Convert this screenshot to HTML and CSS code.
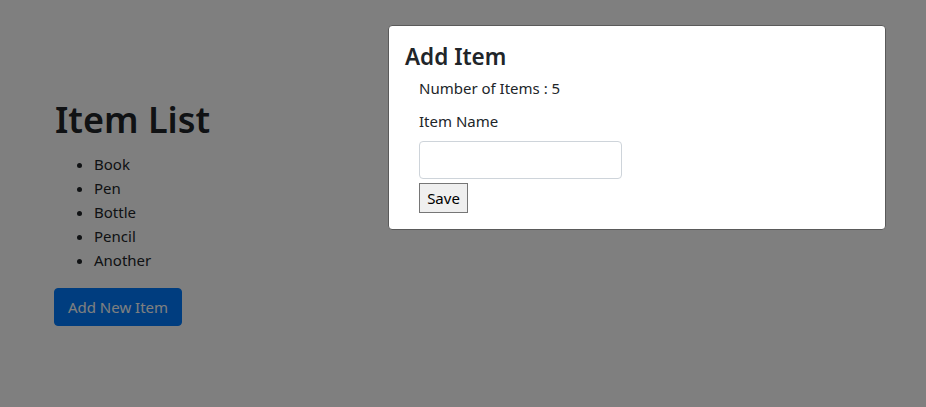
FILE: index.html
```html
<!DOCTYPE html>
<html>
<head>
<meta charset="utf-8">
<link rel="stylesheet" href="styles.css">
</head>
<body>
<div class="page">
  <h1 class="title">Item List</h1>
  <ul class="items">
    <li>Book</li>
    <li>Pen</li>
    <li>Bottle</li>
    <li>Pencil</li>
    <li>Another</li>
  </ul>
  <button class="btn-primary">Add New Item</button>
</div>
<div class="backdrop"></div>
<div class="modal">
  <h3 class="modal-title">Add Item</h3>
  <div class="modal-body">
    <p class="count">Number of Items : 5</p>
    <label class="label">Item Name</label>
    <input class="input" type="text">
    <button class="save">Save</button>
  </div>
</div>
</body>
</html>
```
FILE: styles.css
```css
html, body {
  margin: 0;
  padding: 0;
  background: #ffffff;
  font-family: "Noto Sans", "Open Sans", sans-serif;
  color: #212529;
  font-size: 15px;
}
.page {
  padding: 96px 0 0 55px;
}
.title {
  margin: 0 0 8px;
  font-size: 36px;
  font-weight: 600;
  line-height: 48px;
}
.items {
  margin: 0 0 16px;
  padding-left: 39px;
  line-height: 24px;
}
.btn-primary {
  font-family: inherit;
  font-size: 15px;
  color: #ffffff;
  background: #007bff;
  border: 1px solid #007bff;
  border-radius: 4px;
  width: 128px;
  height: 38px;
  margin-left: -1px;
  padding: 0;
}
.backdrop {
  position: fixed;
  inset: 0;
  background: rgba(0, 0, 0, 0.5);
}
.modal {
  position: fixed;
  left: 388px;
  top: 25px;
  width: 496px;
  height: 203px;
  background: #ffffff;
  border: 1px solid #5a5a5a;
  border-radius: 4px;
}
.modal-title {
  margin: 0;
  padding: 16px 0 0 16px;
  font-size: 22.5px;
  font-weight: 600;
  line-height: 30px;
}
.modal-body {
  padding: 4px 0 0 30px;
  display: flex;
  flex-direction: column;
  align-items: flex-start;
}
.count {
  margin: 0 0 9px;
  line-height: 24px;
}
.label {
  line-height: 24px;
  margin-bottom: 8px;
}
.input {
  width: 203px;
  height: 38px;
  box-sizing: border-box;
  border: 1px solid #ced4da;
  border-radius: 4px;
  margin: 0 0 4px;
}
.save {
  font-family: inherit;
  font-size: 15px;
  color: #000;
  background: #efefef;
  border: 1px solid #767676;
  border-radius: 0;
  width: 49px;
  height: 30px;
  padding: 0;
}
```
